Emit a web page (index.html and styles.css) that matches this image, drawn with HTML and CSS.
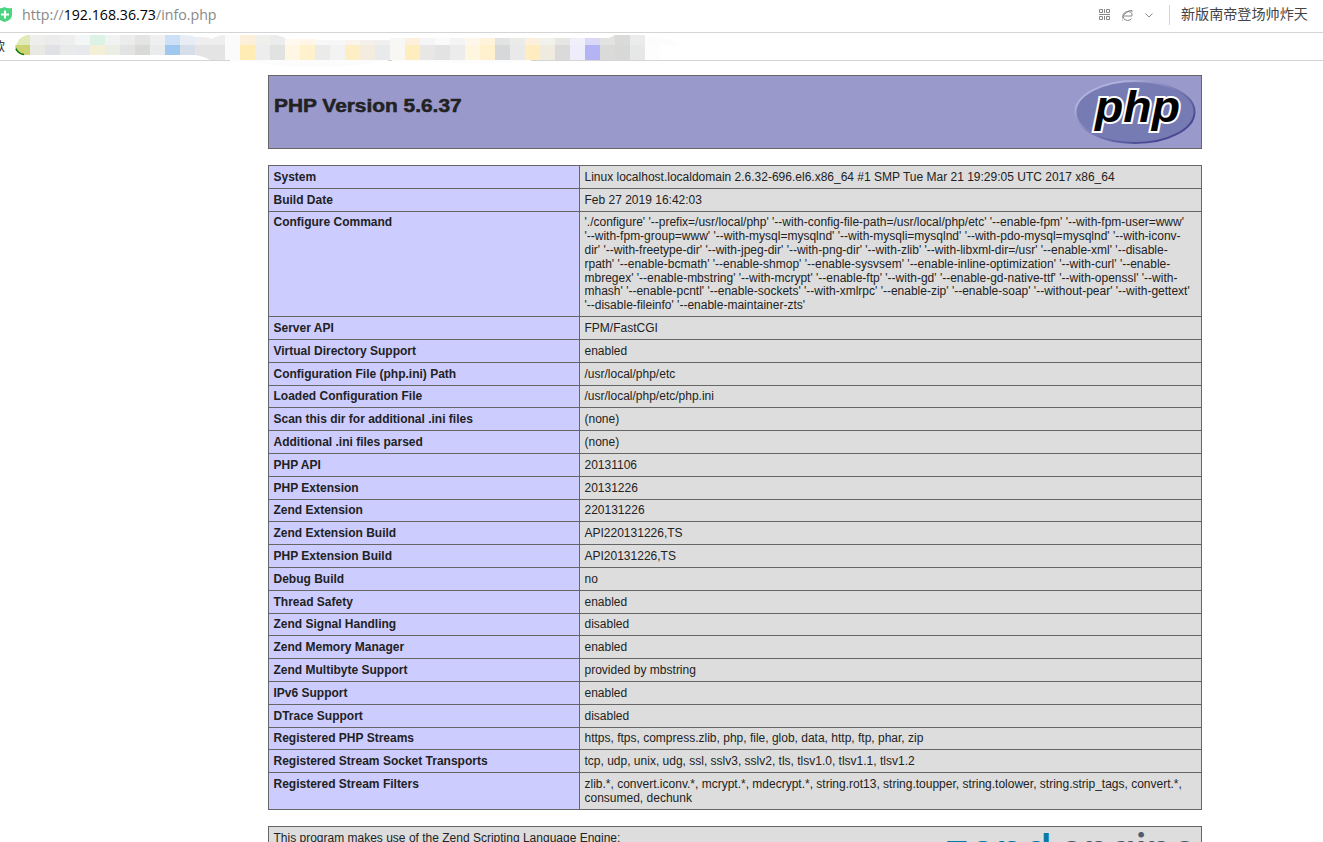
FILE: index.html
```
<!DOCTYPE html>
<html lang="en">
<head>
    <meta charset="UTF-8">
    <title>phpinfo()</title>
    <link rel="stylesheet" href="styles.css">
</head>
<body>
    <div class="address-bar">
        <svg class="shield" width="12" height="16" viewBox="0 0 12 16">
            <path d="M-3 1Q1 2 4.500 0Q8 2 12 1V8Q12 13 4.500 15Q-3 13 -3 8Z" fill="#4bd47f"/>
            <path d="M1 7.500H9M5 3.500V11.500" stroke="#fff" stroke-width="2"/>
        </svg>
        <div class="url">http://<b>192.168.36.73</b>/info.php</div>
        <div class="tools">
            <svg width="12" height="12" viewBox="0 0 12 12" fill="none" stroke="#888">
                <path d="M.5 .5h3v3h-3zM7.500 .5h3v3h-3zM.5 7.500h3v3h-3zM7.500 7.500h3v3h-3zM5.500 0v4M5.500 7v4M0 5.500h11"/>
            </svg>
            <svg width="12" height="13" viewBox="2 0 12 13" fill="none" stroke="#888">
                <path d="M3.500 7H12Q12.500 2.500 8 2.500Q3 3 3 7.500Q3.500 11.500 7.500 11.500Q10.500 11.500 11.500 9.500M2.500 11.500Q.5 10 4 5.500Q9 .5 12 1.500V3"/>
            </svg>
            <svg width="8" height="5" viewBox="0 0 8 5" fill="none" stroke="#888">
                <path d="M.5 .5L4 4L7.500 .5"/>
            </svg>
        </div>
        <div class="search">新版南帝登场帅炸天</div>
    </div>
    <div class="bookmarks">
        <span>款</span>
        <svg class="mosaic" id="mosaic" width="700" height="37" viewBox="0 30 700 37"></svg>
    </div>

    <div class="center">
        <div class="box header">
            <h1>PHP Version 5.6.37</h1>
            <svg width="122" height="66" viewBox="0 0 122 66">
                <defs>
                    <linearGradient id="rim" x1="0" y1="0" x2="1" y2="1">
                        <stop offset=".2" stop-color="#aeb2dc"/>
                        <stop offset=".5" stop-color="#777bb3"/>
                        <stop offset=".8" stop-color="#484893"/>
                    </linearGradient>
                </defs>
                <ellipse cx="61" cy="32" rx="59.500" ry="31" fill="#777bb3" stroke="url(#rim)" stroke-width="2"/>
                <text class="php" x="21" y="42" textLength="85" lengthAdjust="spacingAndGlyphs">php</text>
            </svg>
        </div>
        <table>
            <tr><th>System</th><td>Linux localhost.localdomain 2.6.32-696.el6.x86_64 #1 SMP Tue Mar 21 19:29:05 UTC 2017 x86_64</td></tr>
            <tr><th>Build Date</th><td>Feb 27 2019 16:42:03</td></tr>
            <tr><th>Configure Command</th><td>'./configure' '--prefix=/usr/local/php' '--with-config-file-path=/usr/local/php/etc' '--enable-fpm' '--with-fpm-user=www'<br>'--with-fpm-group=www' '--with-mysql=mysqlnd' '--with-mysqli=mysqlnd' '--with-pdo-mysql=mysqlnd' '--with-iconv-<br>dir' '--with-freetype-dir' '--with-jpeg-dir' '--with-png-dir' '--with-zlib' '--with-libxml-dir=/usr' '--enable-xml' '--disable-<br>rpath' '--enable-bcmath' '--enable-shmop' '--enable-sysvsem' '--enable-inline-optimization' '--with-curl' '--enable-<br>mbregex' '--enable-mbstring' '--with-mcrypt' '--enable-ftp' '--with-gd' '--enable-gd-native-ttf' '--with-openssl' '--with-<br>mhash' '--enable-pcntl' '--enable-sockets' '--with-xmlrpc' '--enable-zip' '--enable-soap' '--without-pear' '--with-gettext'<br>'--disable-fileinfo' '--enable-maintainer-zts'</td></tr>
            <tr><th>Server API</th><td>FPM/FastCGI</td></tr>
            <tr><th>Virtual Directory Support</th><td>enabled</td></tr>
            <tr><th>Configuration File (php.ini) Path</th><td>/usr/local/php/etc</td></tr>
            <tr><th>Loaded Configuration File</th><td>/usr/local/php/etc/php.ini</td></tr>
            <tr><th>Scan this dir for additional .ini files</th><td>(none)</td></tr>
            <tr><th>Additional .ini files parsed</th><td>(none)</td></tr>
            <tr><th>PHP API</th><td>20131106</td></tr>
            <tr><th>PHP Extension</th><td>20131226</td></tr>
            <tr><th>Zend Extension</th><td>220131226</td></tr>
            <tr><th>Zend Extension Build</th><td>API220131226,TS</td></tr>
            <tr><th>PHP Extension Build</th><td>API20131226,TS</td></tr>
            <tr><th>Debug Build</th><td>no</td></tr>
            <tr><th>Thread Safety</th><td>enabled</td></tr>
            <tr><th>Zend Signal Handling</th><td>disabled</td></tr>
            <tr><th>Zend Memory Manager</th><td>enabled</td></tr>
            <tr><th>Zend Multibyte Support</th><td>provided by mbstring</td></tr>
            <tr><th>IPv6 Support</th><td>enabled</td></tr>
            <tr><th>DTrace Support</th><td>disabled</td></tr>
            <tr><th>Registered PHP Streams</th><td>https, ftps, compress.zlib, php, file, glob, data, http, ftp, phar, zip</td></tr>
            <tr><th>Registered Stream Socket Transports</th><td>tcp, udp, unix, udg, ssl, sslv3, sslv2, tls, tlsv1.0, tlsv1.1, tlsv1.2</td></tr>
            <tr><th>Registered Stream Filters</th><td>zlib.*, convert.iconv.*, mcrypt.*, mdecrypt.*, string.rot13, string.toupper, string.tolower, string.strip_tags, convert.*,<br>consumed, dechunk</td></tr>
        </table>
        <div class="box zend">
            <span>This program makes use of the Zend Scripting Language Engine:</span>
            <svg width="256" height="60" viewBox="0 0 256 60">
                <text x="4" y="33.500" textLength="108" fill="#0679a8" lengthAdjust="spacingAndGlyphs">zend</text>
                <text x="119" y="33.500" textLength="138" fill="#4d5b6c" lengthAdjust="spacingAndGlyphs">engine</text>
            </svg>
        </div>
    </div>

    <script>
        const ns = "http://www.w3.org/2000/svg";
        const mosaic = document.getElementById("mosaic");

        function draw(tag, attrs) {
            const el = document.createElementNS(ns, tag);
            for (const key in attrs) el.setAttribute(key, attrs[key]);
            mosaic.appendChild(el);
        }
        function drawRow(x, top, bottom, colors) {
            colors.split(" ").forEach((c, i) => {
                draw("rect", { x: x + i * 15, y: top, width: 15, height: bottom - top, fill: "#" + c });
            });
        }

        // white patches over the bar's bottom line
        draw("rect", { x: 230, y: 60, width: 158, height: 1, fill: "#fcfcfc" });
        draw("rect", { x: 392, y: 60, width: 139, height: 1, fill: "#fcfcfc" });
        draw("path", { d: "M245 61H385Q350 67 310 67Q270 66 245 61ZM420 61H530Q480 66 420 61Z", fill: "#fcfcfc" });

        drawRow(30, 35, 45, "eeeeed ececec eeeeee f3f6f6 dbf2e5 f1f3f3 ececec e4e4e3 eef0f0 cee0f7");
        drawRow(30, 45, 55, "e9e9e3 e0e1e5 e9eaea e7e9ec f4efd7 ebeee5 e3e3e3 d9d9d8 e9ebec a0c7ee");
        draw("path", { d: "M30 35H27Q19 37 16 45H30Z", fill: "#e0e9b8" });
        draw("path", { d: "M15 45H30V55H22Q16 52 15 45Z", fill: "#cdd273" });
        draw("path", { d: "M15.500 48Q18 54 24 54.500", fill: "none", stroke: "#087808", "stroke-width": 1.5 });
        draw("path", { d: "M15.500 45V49", stroke: "#f3f300" });
        draw("path", { d: "M180 35Q192 35 195 37V45H180Z", fill: "#e7edf5" });
        draw("path", { d: "M180 45H195V55H180Z", fill: "#d6dfe9" });
        draw("path", { d: "M195 37Q206 36 212 39Q218 35 225 35V45H195Z", fill: "#eeeeee" });
        draw("path", { d: "M195 45H225V60H210Q206 57 195 55Z", fill: "#e4e4e4" });
        draw("path", { d: "M225 35H240V60H225Z", fill: "#fbfbfb" });

        drawRow(240, 35, 45, "fdf0da efefec");
        draw("path", { d: "M270 35H276Q281 36 285 38V45H270Z", fill: "#ebeced" });
        drawRow(285, 39, 45, "fff9ef fff6e8");
        drawRow(315, 40, 45, "f6f7f7 f7f7f7 f9f5ec f4f1ec f0f0f0");
        drawRow(390, 38, 45, "f7f7f6 fdf0dc f5f5f7 fafafa f4f4f4 fdf7ec fff3dc e2e4e3 ebebea fdefdd f1f2ec e6e6e5 f0f0fb d9d9f7");
        draw("path", { d: "M600 38H609L615 35V45H600Z", fill: "#e2e2e1" });
        drawRow(615, 35, 45, "dadad9 eaebeb");
        drawRow(240, 45, 60, "ffebb4 ecedec e0e3e2 fff7e4 fff1cb ebebea f3f3f3 feeec4 f5ece0 e8eaec f8f7f4 feedbd e9e6e6 e3e3e3 ececec fff6e0 fff0ce d6d8da e8e9e8 ffedc0 efebdf dadada eeeefb b4b4f5 dadad8 d7d8d7 e5e8e7 fdfdfd");
        draw("path", { d: "M645 37Q668 37 681 45H645Z", fill: "#fcfcfc" });
    </script>
</body>
</html>
```
FILE: styles.css
```
body {
    margin: 0;
    height: 842px;
    overflow: hidden;
    background-color: #fff;
    color: #222;
    font-family: "Liberation Sans", Arial, sans-serif;
    font-size: 12px;
}
.address-bar {
    display: flex;
    align-items: center;
    height: 32px;
    border-bottom: 1px solid #d4d4d4;
    font-family: "Open Sans", "Noto Sans CJK SC", sans-serif;
}
.shield {
    margin-top: -3px;
}
.url {
    margin: -3px 0 0 10px;
    color: #888;
    font-size: 14.2px;
    white-space: nowrap;
}
.url b {
    color: #000;
    font-weight: normal;
}
.tools {
    display: flex;
    align-items: center;
    gap: 11px;
    margin-left: auto;
    margin-top: -2px;
}
.search {
    width: 142px;
    height: 20px;
    margin: -3px 0 0 16px;
    padding-left: 11px;
    border-left: 1px solid #d4d4d4;
    font-family: "Noto Sans CJK SC", sans-serif;
    font-size: 14.1px;
    line-height: 17px;
    color: #444;
}
.bookmarks {
    display: grid;
    height: 27px;
    border-bottom: 1px solid #d4d4d4;
    font-family: "Noto Sans CJK SC", sans-serif;
}
.bookmarks span, .mosaic {
    grid-area: 1 / 1;
}
.bookmarks span {
    margin: 4px 0 0 -7px;
    line-height: 18px;
}
.mosaic {
    margin-top: -3px;
    z-index: 1;
}
.center {
    width: 934px;
    margin: 14px 0 0 268px;
}
.box {
    display: flex;
    justify-content: space-between;
    box-sizing: border-box;
    border: 1px solid #666;
}
.header {
    height: 74px;
    padding: 4px 5px;
    background-color: #9999cc;
}
h1 {
    margin: 16px 0 0;
    font-size: 18px;
    line-height: 21px;
    -webkit-text-stroke: 0.5px #222;
    transform: scaleX(1.16);
    transform-origin: left;
}
.php {
    font-size: 44px;
    font-weight: bold;
    font-style: italic;
    stroke: #fff;
    stroke-width: 4px;
    paint-order: stroke;
    fill: #000;
}
table {
    width: 934px;
    margin: 16px 0;
    border-collapse: collapse;
    table-layout: fixed;
}
th, td {
    padding: 4.875px 5px 3.125px 4.5px;
    border: 1px solid #666;
    line-height: 13.8px;
    text-align: left;
    vertical-align: top;
    white-space: nowrap;
}
th {
    width: 300.5px;
    background-color: #ccccff;
}
td {
    background-color: #dddddd;
}
.zend {
    height: 70px;
    padding: 4px 5px 4px 4.5px;
    background-color: #dddddd;
    line-height: 14px;
}
.zend text {
    font-family: Inter, sans-serif;
    font-size: 44px;
    font-weight: 500;
}
```
